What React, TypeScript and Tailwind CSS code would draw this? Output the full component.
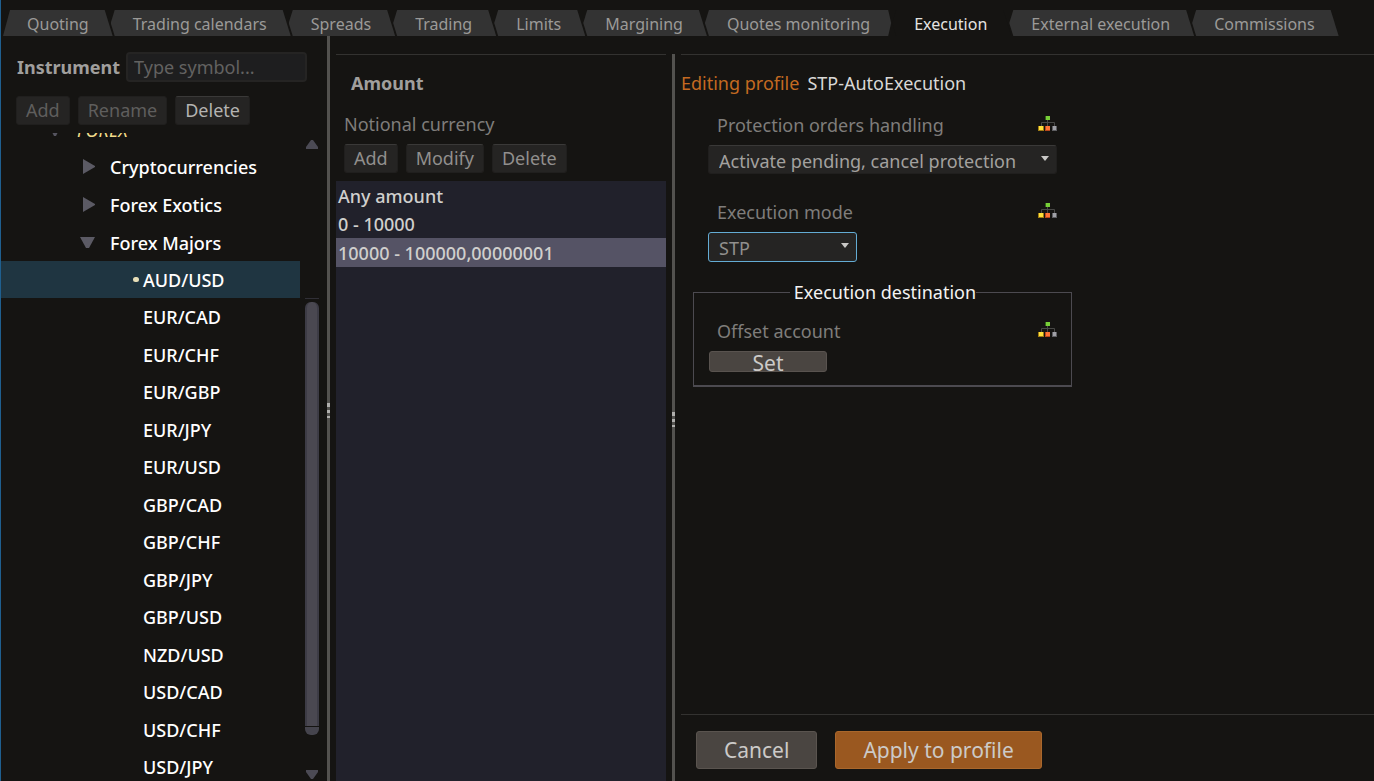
import React, { useState } from "react";
import clsx from "clsx";

const tabs = [
  "Quoting",
  "Trading calendars",
  "Spreads",
  "Trading",
  "Limits",
  "Margining",
  "Quotes monitoring",
  "Execution",
  "External execution",
  "Commissions",
];

const groups = ["Cryptocurrencies", "Forex Exotics", "Forex Majors"];

const symbols = [
  "AUD/USD",
  "EUR/CAD",
  "EUR/CHF",
  "EUR/GBP",
  "EUR/JPY",
  "EUR/USD",
  "GBP/CAD",
  "GBP/CHF",
  "GBP/JPY",
  "GBP/USD",
  "NZD/USD",
  "USD/CAD",
  "USD/CHF",
  "USD/JPY",
];

const amounts = ["Any amount", "0 - 10000", "10000 - 100000,00000001"];

const Splitter = () => (
  <div className="flex w-[3px] shrink-0 flex-col items-center justify-center gap-[3px] bg-[#53524f] pt-[4px]">
    <span className="h-[4px] w-full bg-[#b0afad]" />
    <span className="h-[3px] w-full bg-[#b0afad]" />
    <span className="h-[2px] w-full bg-[#b0afad]" />
  </div>
);

const InheritIcon = () => (
  <svg width="19" height="18" viewBox="0 0 19 18" className="shrink-0">
    <path d="M9.500 4v6M3.500 10V6.500H16.500V10" fill="none" stroke="#484846" strokeWidth="1" />
    <rect x="7" y="0" width="2" height="4" fill="#35611b" />
    <rect x="8" y="0" width="4" height="4" fill="#78cf38" />
    <rect x="0" y="10" width="6" height="5" fill="#a07c14" />
    <rect x="1" y="10" width="4" height="4" fill="#ffe03a" />
    <rect x="7" y="10" width="5" height="5" fill="#b8481c" />
    <rect x="8" y="10" width="4" height="4" fill="#ff7436" />
    <rect x="14" y="10" width="5" height="5" fill="#5e5e62" />
    <rect x="15" y="10" width="3" height="4" fill="#a0a0a6" />
  </svg>
);

const Caret = () => (
  <svg width="8" height="5" viewBox="0 0 8 5" className="pointer-events-none absolute right-[8px] top-[11px]">
    <path d="M0 0H8L4 5Z" fill="#c9c8c6" />
  </svg>
);

const SmallButton = ({
  children,
  muted = false,
  bright = false,
}: {
  children: React.ReactNode;
  muted?: boolean;
  bright?: boolean;
}) => (
  <button
    type="button"
    className={clsx(
      "h-[29px] rounded-[3px] border border-[#201f1e] bg-[#252423] px-[9px] pb-[2px] leading-[24px]",
      muted ? "border-[#2b2a29] text-[#5f5e5d]" : "border-t-[#3a3938]",
      !muted && (bright ? "text-[#b4b3b1]" : "text-[#918f8d]")
    )}
  >
    {children}
  </button>
);

const tabShape = (i: number, active: number) => {
  if (i === 0) return "pl-[24px] [clip-path:polygon(7px_0,calc(100%-8px)_0,100%_100%,0_100%)]";
  if (i === active - 1)
    return "pl-[22px] [clip-path:polygon(4px_0,calc(100%-6px)_0,calc(100%-3px)_50%,calc(100%-6px)_100%,4px_100%,0_50%)]";
  return "pl-[22px] [clip-path:polygon(4px_0,calc(100%-8px)_0,100%_100%,4px_100%,0_50%)]";
};

const App = () => {
  const [activeTab, setActiveTab] = useState(7);
  const [symbol, setSymbol] = useState("AUD/USD");
  const [amount, setAmount] = useState(amounts[2]);

  return (
    <div className="flex h-screen flex-col overflow-hidden border-l border-[#1f5f8f] bg-[#151412] font-['Noto_Sans',sans-serif] text-[18px] leading-[24px] text-[#7f7d7b]">
      <nav className="flex h-[36px] shrink-0 items-end pl-[2px] text-[16px]">
        {tabs.map((tab, i) => (
          <button
            key={tab}
            type="button"
            onClick={() => setActiveTab(i)}
            className={clsx(
              "-mr-[2px] h-[26px] shrink-0 pr-[24px] leading-[28px] whitespace-nowrap",
              tabShape(i, activeTab),
              i === activeTab ? "bg-[#151412] text-[#e4e3e1]" : "bg-[#333333] text-[#9b9a98]"
            )}
          >
            {tab}
          </button>
        ))}
      </nav>

      <div className="flex min-h-0 flex-1">
        <aside className="flex w-[326px] shrink-0 flex-col pt-[16px]">
          <div className="flex items-center gap-[6px] pr-[20px] pl-[16px]">
            <label htmlFor="symbol" className="font-bold text-[#a09f9d]">
              Instrument
            </label>
            <input
              id="symbol"
              placeholder="Type symbol..."
              className="h-[30px] min-w-0 flex-1 rounded-[4px] border-2 border-[#252423] bg-[#1e1e1f] px-[6px] outline-none placeholder:text-[#636261]"
            />
          </div>
          <div className="mt-[14px] flex gap-[8px] pl-[15px]">
            <SmallButton muted>Add</SmallButton>
            <SmallButton muted>Rename</SmallButton>
            <SmallButton bright>Delete</SmallButton>
          </div>

          <div className="mt-[8px] flex min-h-0 flex-1">
            <div className="min-w-0 flex-1 overflow-hidden">
              <ul className="-mt-[22px] font-medium text-white">
                <li className="flex h-[37px] items-center pl-[47px]">
                  <svg width="14" height="12" viewBox="0 0 14 12">
                    <path d="M0 0H14L8 12H6Z" fill="#55545f" />
                  </svg>
                  <span className="pl-[15px] leading-[12px] font-normal text-[#f1dc8b] italic">FOREX</span>
                </li>
                {groups.map((group) => (
                  <li key={group} className="flex h-[38px] items-center pl-[79px] nth-4:h-[37px]">
                    <svg width="16" height="16" viewBox="0 0 16 16">
                      <path
                        d={group === "Forex Majors" ? "M0 2H15L9 13H6Z" : "M3 0L15 7V8L3 15Z"}
                        fill="#5b5a64"
                      />
                    </svg>
                    <span className="pl-[14px]">{group}</span>
                  </li>
                ))}
                {symbols.map((name) => (
                  <li key={name} className="h-[37px] even:h-[38px]">
                    <button
                      type="button"
                      onClick={() => setSymbol(name)}
                      className={clsx(
                        "flex h-[37px] w-full items-center pl-[132px]",
                        name === symbol && "bg-[#1f3541]"
                      )}
                    >
                      <span className="flex w-[10px]">
                        {name === symbol && <span className="h-[5px] w-[6px] rounded-full bg-[#e8dfb8]" />}
                      </span>
                      {name}
                    </button>
                  </li>
                ))}
              </ul>
            </div>
            <div className="mr-[8px] ml-[5px] flex w-[14px] shrink-0 flex-col items-center pt-[7px] pb-[2px]">
              <svg width="12" height="9" viewBox="0 0 12 9">
                <path d="M0 9V7L5 0H7L12 7V9Z" fill="#4b4a54" />
              </svg>
              <span className="mt-[149px] h-px w-full bg-[#302f36]" />
              <span className="mt-[3px] w-full flex-1 rounded-t-[6px] border-x-2 border-[#3d3c46] bg-[#4a4851]" />
              <span className="mt-px mb-[35px] h-[8px] w-full rounded-b-[6px] bg-[#45444d]" />
              <svg width="12" height="9" viewBox="0 0 12 9">
                <path d="M0 0H12V2L7 9H5L0 2Z" fill="#4b4a54" />
              </svg>
            </div>
          </div>
        </aside>

        <Splitter />

        <section className="flex w-[342px] shrink-0 flex-col px-[6px] pt-[18px]">
          <div className="border-t border-[#333230] pt-[16px] pl-[8px]">
            <h2 className="pl-[7px] font-bold text-[#a09f9d]">Amount</h2>
            <p className="mt-[17px]">Notional currency</p>
            <div className="mt-[8px] mb-[8px] flex gap-[8px]">
              <SmallButton>Add</SmallButton>
              <SmallButton>Modify</SmallButton>
              <SmallButton>Delete</SmallButton>
            </div>
          </div>
          <ul className="flex-1 bg-[#21212b] font-medium text-[#d0cfcd]">
            {amounts.map((item) => (
              <li key={item} className="h-[29px] even:h-[28px]">
                <button
                  type="button"
                  onClick={() => setAmount(item)}
                  className={clsx("h-full w-full pl-[2px] text-left", item === amount && "bg-[#555365]")}
                >
                  {item}
                </button>
              </li>
            ))}
          </ul>
        </section>

        <div className="flex pt-[18px]">
          <Splitter />
        </div>

        <main className="flex min-w-0 flex-1 flex-col pt-[18px] pl-[6px]">
          <div className="flex-1 border-t border-[#333230] pt-[16px]">
            <h1 className="flex gap-[8px] text-[#d9d8d6]">
              <span className="text-[#c46a21]">Editing profile</span>
              STP-AutoExecution
            </h1>

            <div className="mt-[18px] max-w-[376px] pl-[27px]">
              <div className="flex items-center justify-between pl-[9px]">
                <label htmlFor="protection">Protection orders handling</label>
                <InheritIcon />
              </div>
              <div className="relative mt-[8px]">
                <select
                  id="protection"
                  className="h-[29px] w-full appearance-none rounded-[3px] border border-[#201f1e] border-t-[#3a3938] bg-[#252423] pt-[2px] pl-[10px] text-[#a3a19f] outline-none"
                >
                  <option>Activate pending, cancel protection</option>
                </select>
                <Caret />
              </div>

              <div className="mt-[26px] flex items-center justify-between pl-[9px]">
                <label htmlFor="mode">Execution mode</label>
                <InheritIcon />
              </div>
              <div className="relative mt-[8px] w-[149px]">
                <select
                  id="mode"
                  className="h-[30px] w-full appearance-none rounded-[3px] border border-[#64acd4] bg-[#252423] pt-[2px] pl-[10px] text-[#918f8d] outline-none"
                >
                  <option>STP</option>
                </select>
                <Caret />
              </div>
            </div>

            <fieldset className="mt-[18px] ml-[12px] max-w-[379px] border border-b-2 border-[#4c4a50] pr-[14px] pb-[13px] pl-[15px]">
              <legend className="mx-auto pl-[4px] text-[#f4f3f2]">Execution destination</legend>
              <div className="mt-[15px] flex items-center justify-between pl-[8px]">
                <label htmlFor="offset">Offset account</label>
                <InheritIcon />
              </div>
              <button
                id="offset"
                type="button"
                className="mt-[8px] flex h-[21px] w-[118px] items-center justify-center rounded-[3px] border border-[#59534f] bg-[#4a4541] pt-[4px] text-[21px] leading-[21px] text-[#cccac8]"
              >
                Set
              </button>
            </fieldset>
          </div>

          <footer className="flex gap-[18px] border-t border-[#333230] pt-[16px] pb-[12px] pl-[15px] text-[21px] text-[#cccac8]">
            <button type="button" className="h-[38px] rounded-[3px] border border-[#5a544f] bg-[#4a4541] px-[27px]">
              Cancel
            </button>
            <button type="button" className="h-[38px] rounded-[3px] border border-[#a9672c] bg-[#9a5820] px-[27px]">
              Apply to profile
            </button>
          </footer>
        </main>
      </div>
    </div>
  );
};

export default App;
